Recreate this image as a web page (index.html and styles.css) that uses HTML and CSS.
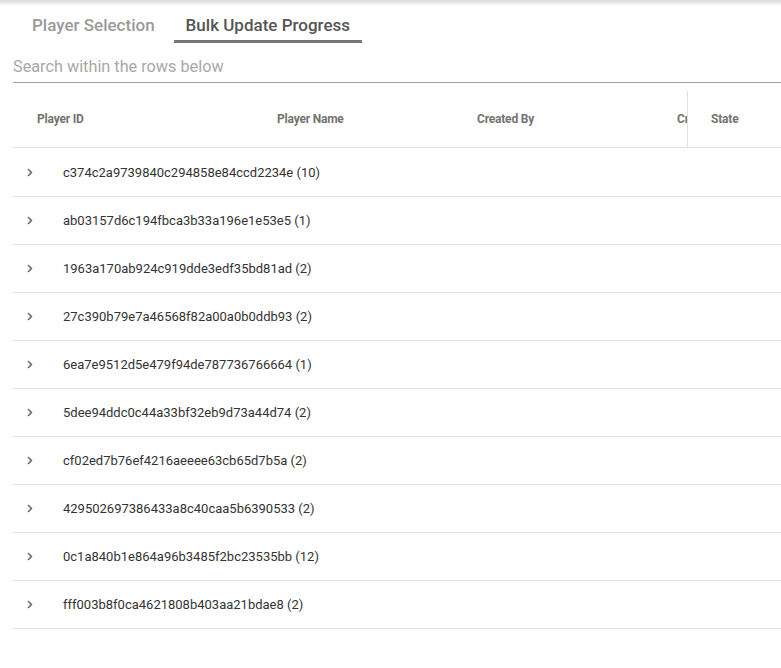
FILE: index.html
```html
<!DOCTYPE html>
<html>
<head>
<meta charset="utf-8">
<link rel="stylesheet" href="styles.css">
</head>
<body>
<div class="topshadow"></div>
<div class="page">
  <div class="tabs">
    <div class="tab">Player Selection</div>
    <div class="tab active">Bulk Update Progress</div>
  </div>
  <div class="search"><input class="search-input" type="text" placeholder="Search within the rows below"></div>
  <div class="table">
    <div class="head">
      <div class="cell c1">Player ID</div>
      <div class="cell c2">Player Name</div>
      <div class="cell c3">Created By</div>
      <div class="cell c4"><span class="clip">Created At</span></div>
      <div class="cell c5">State</div>
    </div>
    <div class="rows">
    <div class="row"><span class="chev"><svg width="6" height="9" viewBox="0 0 6 9"><path d="M1 1l3.5 3.5L1 8" fill="none" stroke="#666" stroke-width="1.5"/></svg></span><span class="id">c374c2a9739840c294858e84ccd2234e (10)</span></div>
    <div class="row"><span class="chev"><svg width="6" height="9" viewBox="0 0 6 9"><path d="M1 1l3.5 3.5L1 8" fill="none" stroke="#666" stroke-width="1.5"/></svg></span><span class="id">ab03157d6c194fbca3b33a196e1e53e5 (1)</span></div>
    <div class="row"><span class="chev"><svg width="6" height="9" viewBox="0 0 6 9"><path d="M1 1l3.5 3.5L1 8" fill="none" stroke="#666" stroke-width="1.5"/></svg></span><span class="id">1963a170ab924c919dde3edf35bd81ad (2)</span></div>
    <div class="row"><span class="chev"><svg width="6" height="9" viewBox="0 0 6 9"><path d="M1 1l3.5 3.5L1 8" fill="none" stroke="#666" stroke-width="1.5"/></svg></span><span class="id">27c390b79e7a46568f82a00a0b0ddb93 (2)</span></div>
    <div class="row"><span class="chev"><svg width="6" height="9" viewBox="0 0 6 9"><path d="M1 1l3.5 3.5L1 8" fill="none" stroke="#666" stroke-width="1.5"/></svg></span><span class="id">6ea7e9512d5e479f94de787736766664 (1)</span></div>
    <div class="row"><span class="chev"><svg width="6" height="9" viewBox="0 0 6 9"><path d="M1 1l3.5 3.5L1 8" fill="none" stroke="#666" stroke-width="1.5"/></svg></span><span class="id">5dee94ddc0c44a33bf32eb9d73a44d74 (2)</span></div>
    <div class="row"><span class="chev"><svg width="6" height="9" viewBox="0 0 6 9"><path d="M1 1l3.5 3.5L1 8" fill="none" stroke="#666" stroke-width="1.5"/></svg></span><span class="id">cf02ed7b76ef4216aeeee63cb65d7b5a (2)</span></div>
    <div class="row"><span class="chev"><svg width="6" height="9" viewBox="0 0 6 9"><path d="M1 1l3.5 3.5L1 8" fill="none" stroke="#666" stroke-width="1.5"/></svg></span><span class="id">429502697386433a8c40caa5b6390533 (2)</span></div>
    <div class="row"><span class="chev"><svg width="6" height="9" viewBox="0 0 6 9"><path d="M1 1l3.5 3.5L1 8" fill="none" stroke="#666" stroke-width="1.5"/></svg></span><span class="id">0c1a840b1e864a96b3485f2bc23535bb (12)</span></div>
    <div class="row"><span class="chev"><svg width="6" height="9" viewBox="0 0 6 9"><path d="M1 1l3.5 3.5L1 8" fill="none" stroke="#666" stroke-width="1.5"/></svg></span><span class="id">fff003b8f0ca4621808b403aa21bdae8 (2)</span></div>
    </div>
  </div>
</div>
</body>
</html>
```
FILE: styles.css
```css
* { box-sizing: border-box; }
html, body { margin: 0; padding: 0; background: #fff; }
body { font-family: Roboto, "Liberation Sans", sans-serif; width: 781px; height: 668px; overflow: hidden; }
.topshadow { height: 6px; background: linear-gradient(to bottom, rgba(0,0,0,0.14), rgba(0,0,0,0)); }
.page { padding-left: 13px; }
.tabs { display: flex; gap: 7px; padding-left: 7px; height: 37px; }
.tab { font-size: 17px; font-weight: 500; color: #9a9a9a; padding: 0 12px; height: 37px; line-height: 36px; padding-top: 1px; border-bottom: 3px solid transparent; white-space: nowrap; }
.tab.active { color: #555; border-bottom-color: #777; }
.search { margin-top: 7px; height: 33px; border-bottom: 1px solid #9e9e9e; }
.search-input { border: 0; outline: none; padding: 0; margin: 0; width: 100%; height: 32px; font-family: inherit; font-size: 16.25px; color: #333; background: transparent; }
.search-input::placeholder { color: #a8a8a8; }
.table { margin-top: 8px; }
.head { display: grid; grid-template-columns: 240px 200px 200px 34px 94px; height: 57px; border-bottom: 1px solid #e0e0e0; }
.cell { padding-left: 24px; font-size: 12px; font-weight: 700; color: #737373; line-height: 56px; white-space: nowrap; overflow: hidden; letter-spacing: -0.2px; }
.c4 { padding-left: 0; }
.clip { display: block; margin-left: 24px; width: 10px; overflow: hidden; }
.c5 { border-left: 1px solid #e0e0e0; padding-left: 23px; }
.rows { padding-top: 1px; }
.row { display: flex; align-items: center; height: 48px; border-bottom: 1px solid #e0e0e0; }
.chev { width: 50px; padding-left: 14px; display: flex; align-items: center; }
.id { font-size: 13px; color: #333; }
```
